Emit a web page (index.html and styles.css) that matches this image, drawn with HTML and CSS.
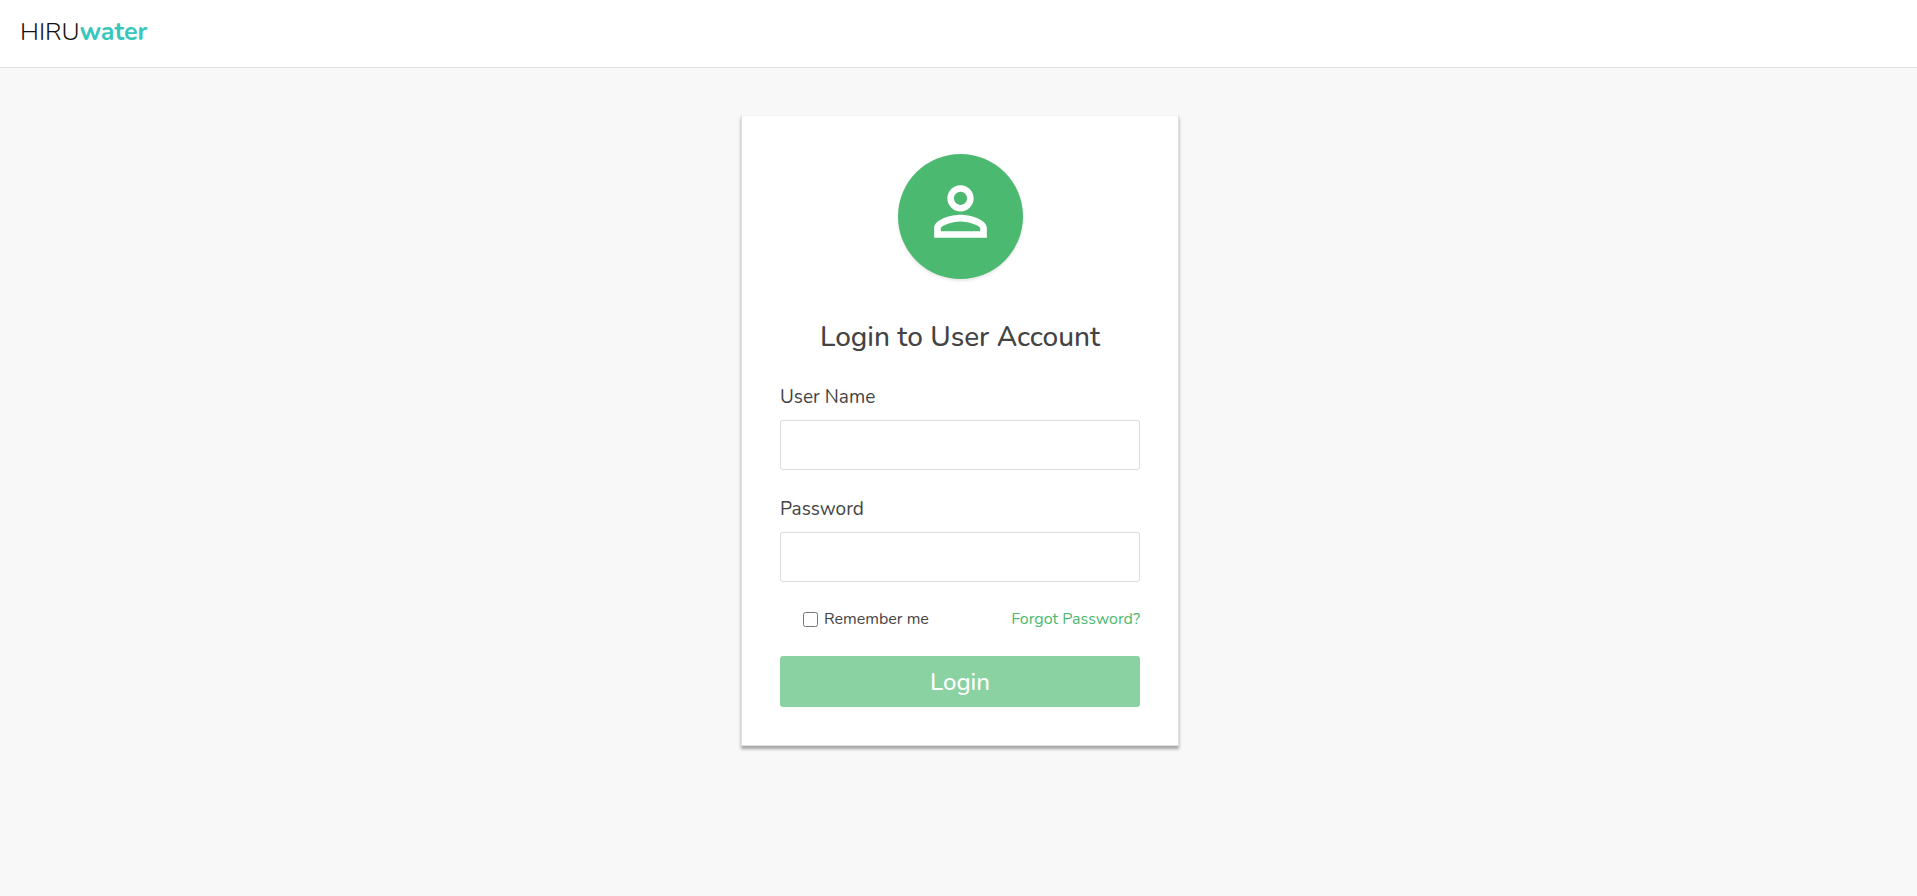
FILE: index.html
```
<!DOCTYPE html>
<html lang="en">
<head>
    <meta charset="UTF-8">
    <meta name="viewport" content="width=device-width, initial-scale=1.0">
    <title>HIRUwater</title>
    <link rel="stylesheet" href="styles.css">
</head>
<body>
    <header class="header">
        <a class="logo" href="#">HIRU<b>water</b></a>
    </header>

    <main class="content">
        <form class="login-box">
            <div class="avatar">
                <svg viewBox="0 0 24 24" aria-hidden="true">
                    <path d="M12 6c1.1 0 2 .9 2 2s-.9 2-2 2-2-.9-2-2 .9-2 2-2m0 9c2.7 0 5.8 1.29 6 2v1H6v-.99c.2-.72 3.3-2.01 6-2.01m0-11C9.79 4 8 5.79 8 8s1.79 4 4 4 4-1.79 4-4-1.79-4-4-4zm0 9c-2.67 0-8 1.34-8 4v3h16v-3c0-2.66-5.33-4-8-4z"/>
                </svg>
            </div>
            <h1>Login to User Account</h1>
            <div class="form-group">
                <label for="username">User Name</label>
                <input type="text" id="username">
            </div>
            <div class="form-group">
                <label for="password">Password</label>
                <input type="password" id="password">
            </div>
            <div class="options">
                <div class="remember">
                    <input type="checkbox" id="remember">
                    <label for="remember">Remember me</label>
                </div>
                <a href="#">Forgot Password?</a>
            </div>
            <button type="submit">Login</button>
        </form>
    </main>
</body>
</html>
```
FILE: styles.css
```
* { box-sizing: border-box; }
body { margin: 0; background-color: #f8f8f8; color: #444; font-family: Nunito, Lato, sans-serif; font-size: 16px; }
a { color: #4cb971; text-decoration: none; }

.header { height: 68px; padding: 15px 20px; background-color: #fff; border-bottom: 1px solid #dfe0e1; }
.logo { display: block; color: #111; font-size: 25px; font-weight: 300; line-height: 34px; }
.logo b { color: #37c6bc; font-weight: 700; }

.content { padding: 47px 12px 48px 15px; }
.login-box { max-width: 438px; margin: 0 auto; padding: 38px; background-color: #fff; border: 1px solid #e2e2e2; border-top-color: #f2f2f2; box-shadow: 0 3px 3px rgba(0, 0, 0, 0.35); }

.avatar { width: 125px; height: 125px; margin: 0 auto 40px; padding-top: 18px; border-radius: 50%; background-color: #4cb971; box-shadow: 0 2px 3px rgba(0, 0, 0, 0.1); text-align: center; }
.avatar svg { width: 79px; height: 79px; fill: #fff; }

h1 { margin: 0 0 30px; font-size: 28px; font-weight: 500; line-height: 36px; text-align: center; }

.form-group { margin-bottom: 27px; }
.form-group label { display: block; margin-bottom: 11px; font-size: 19px; line-height: 24px; }
.form-group input { display: block; width: 100%; height: 50px; padding: 8px 12px; border: 1px solid #dcdcdc; border-radius: 3px; font: inherit; }

.options { display: flex; justify-content: space-between; align-items: center; margin-bottom: 27px; padding-left: 23px; line-height: 20px; }
.remember { display: flex; align-items: center; gap: 6px; }
.remember input { width: 15px; height: 15px; margin: 0; }

button { display: block; width: 100%; height: 51px; padding: 0; border: 0; border-radius: 3px; background-color: #8ad2a2; color: #fff; font-family: inherit; font-size: 24px; font-weight: 500; }
```
